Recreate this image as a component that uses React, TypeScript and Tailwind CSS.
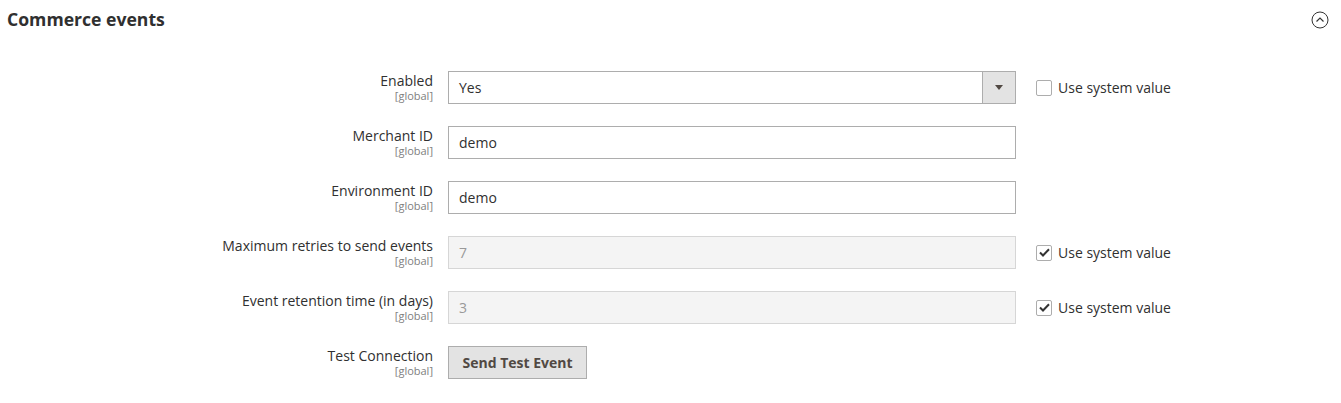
import { ChevronDown } from 'lucide-react';

type Row = {
  label: string;
  kind: 'select' | 'text' | 'disabled' | 'button';
  value?: string;
  inherit?: boolean;
  checked?: boolean;
};

const rows: Row[] = [
  { label: 'Enabled', kind: 'select', value: 'Yes', inherit: true, checked: false },
  { label: 'Merchant ID', kind: 'text', value: 'demo' },
  { label: 'Environment ID', kind: 'text', value: 'demo' },
  { label: 'Maximum retries to send events', kind: 'disabled', value: '7', inherit: true, checked: true },
  { label: 'Event retention time (in days)', kind: 'disabled', value: '3', inherit: true, checked: true },
  { label: 'Test Connection', kind: 'button' },
];

function Checkbox({ checked }: { checked?: boolean }) {
  return (
    <span className="w-[16px] h-[16px] border border-[#adadad] rounded-[2px] bg-white flex items-center justify-center">
      {checked && (
        <svg width="11" height="9" viewBox="0 0 11 9">
          <path d="M1 4.5 L4 7.5 L10 1.2" fill="none" stroke="#333" strokeWidth="2" />
        </svg>
      )}
    </span>
  );
}

function Field({ row }: { row: Row }) {
  if (row.kind === 'button') {
    return (
      <button className="h-[33px] w-[139px] bg-[#e3e3e3] border border-[#adadad] text-[14px] font-bold text-[#514943]">
        Send Test Event
      </button>
    );
  }
  if (row.kind === 'select') {
    return (
      <div className="h-[33px] w-[568px] border border-[#adadad] bg-white flex items-center">
        <span className="flex-1 pl-[10px] text-[14px] text-[#303030]">{row.value}</span>
        <span className="w-[33px] h-full bg-[#e3e3e3] border-l border-[#adadad] flex items-center justify-center">
          <svg width="8" height="5" viewBox="0 0 8 5">
            <path d="M0 0 H8 L4 5 Z" fill="#514943" />
          </svg>
        </span>
      </div>
    );
  }
  const disabled = row.kind === 'disabled';
  return (
    <div
      className={
        disabled
          ? 'h-[33px] w-[568px] border border-[#d6d6d6] bg-[#f4f4f4] flex items-center pl-[10px] text-[14px] text-[#999]'
          : 'h-[33px] w-[568px] border border-[#adadad] bg-white flex items-center pl-[10px] text-[14px] text-[#303030]'
      }
    >
      {row.value}
    </div>
  );
}

export default function App() {
  return (
    <div className="w-[1341px] h-[403px] bg-white text-[#303030] font-['Open_Sans',sans-serif]">
      <div className="flex items-center justify-between pl-[7px] pr-[12px] pt-[3px] h-[35px]">
        <h2 className="text-[17.6px] font-bold text-[#303030]">Commerce events</h2>
        <svg width="18" height="18" viewBox="0 0 18 18" className="mt-[2px]">
          <circle cx="9" cy="9" r="8" fill="none" stroke="#333" strokeWidth="1" />
          <path d="M5.5 10.5 L9 7 L12.5 10.5" fill="none" stroke="#333" strokeWidth="1.2" />
        </svg>
      </div>
      <div className="flex flex-col gap-[22px] pt-[36px]">
        {rows.map((row) => (
          <div key={row.label} className="flex items-start">
            <div className="w-[433px] text-right pt-[1px]">
              <div className="text-[14px] leading-[18px] text-[#303030]">{row.label}</div>
              <div className="text-[11px] leading-[12px] text-[#808080]">[global]</div>
            </div>
            <div className="ml-[15px]">
              <Field row={row} />
            </div>
            {row.inherit && (
              <label className="ml-[20px] h-[33px] flex items-center gap-[6px] text-[14px] text-[#303030]">
                <Checkbox checked={row.checked} />
                Use system value
              </label>
            )}
          </div>
        ))}
      </div>
    </div>
  );
}
